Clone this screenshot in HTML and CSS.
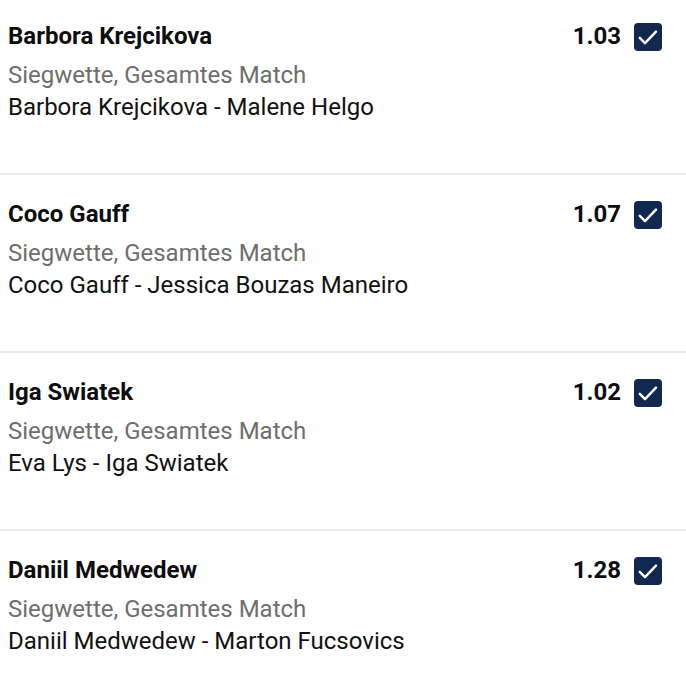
FILE: index.html
```html
<!DOCTYPE html>
<html>
<head>
<meta charset="utf-8">
<link rel="stylesheet" href="styles.css">
</head>
<body>
<div class="list">
  <div class="bet">
    <div class="head">
      <div class="pick">Barbora Krejcikova</div>
      <div class="odds">1.03</div>
      <div class="check"><svg viewBox="0 0 28 28" width="28" height="28"><path d="M5.8 14.8 L11 20.2 L22 8.6" fill="none" stroke="#fff" stroke-width="2.4" stroke-linecap="round" stroke-linejoin="round"/></svg></div>
    </div>
    <div class="market">Siegwette, Gesamtes Match</div>
    <div class="match">Barbora Krejcikova - Malene Helgo</div>
  </div>
  <div class="bet">
    <div class="head">
      <div class="pick">Coco Gauff</div>
      <div class="odds">1.07</div>
      <div class="check"><svg viewBox="0 0 28 28" width="28" height="28"><path d="M5.8 14.8 L11 20.2 L22 8.6" fill="none" stroke="#fff" stroke-width="2.4" stroke-linecap="round" stroke-linejoin="round"/></svg></div>
    </div>
    <div class="market">Siegwette, Gesamtes Match</div>
    <div class="match">Coco Gauff - Jessica Bouzas Maneiro</div>
  </div>
  <div class="bet">
    <div class="head">
      <div class="pick">Iga Swiatek</div>
      <div class="odds">1.02</div>
      <div class="check"><svg viewBox="0 0 28 28" width="28" height="28"><path d="M5.8 14.8 L11 20.2 L22 8.6" fill="none" stroke="#fff" stroke-width="2.4" stroke-linecap="round" stroke-linejoin="round"/></svg></div>
    </div>
    <div class="market">Siegwette, Gesamtes Match</div>
    <div class="match">Eva Lys - Iga Swiatek</div>
  </div>
  <div class="bet">
    <div class="head">
      <div class="pick">Daniil Medwedew</div>
      <div class="odds">1.28</div>
      <div class="check"><svg viewBox="0 0 28 28" width="28" height="28"><path d="M5.8 14.8 L11 20.2 L22 8.6" fill="none" stroke="#fff" stroke-width="2.4" stroke-linecap="round" stroke-linejoin="round"/></svg></div>
    </div>
    <div class="market">Siegwette, Gesamtes Match</div>
    <div class="match">Daniil Medwedew - Marton Fucsovics</div>
  </div>
</div>
</body>
</html>
```
FILE: styles.css
```css
html, body {
  margin: 0;
  padding: 0;
  background: #fff;
  font-family: Roboto, "Noto Sans", sans-serif;
  color: #111;
}
body {
  height: 674px;
  overflow: hidden;
}
.list {
  margin-top: -3px;
}
.bet {
  height: 178px;
  box-sizing: border-box;
  padding: 25px 24px 0 8px;
  border-bottom: 2px solid #e9e9e9;
}
.head {
  display: flex;
  align-items: flex-start;
  height: 28px;
  margin-bottom: 9px;
}
.pick {
  flex: 1;
  font-size: 24px;
  font-weight: 700;
  line-height: 28px;
  color: #0d0d0d;
}
.odds {
  font-size: 24px;
  font-weight: 700;
  line-height: 28px;
  color: #0d0d0d;
  margin-right: 13px;
}
.check {
  width: 28px;
  height: 28px;
  margin-top: 1px;
  border-radius: 4px;
  background: #12294f;
  display: flex;
}
.market {
  font-size: 24px;
  line-height: 32px;
  color: #6e6e6e;
}
.match {
  font-size: 24px;
  line-height: 32px;
  color: #111;
}
```
